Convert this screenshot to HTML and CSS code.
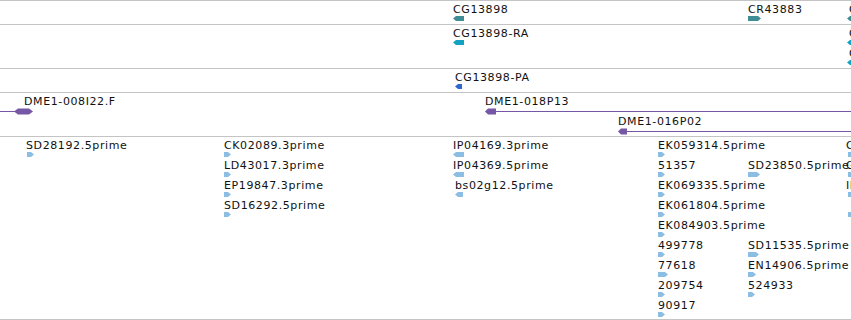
FILE: index.html
```html
<!DOCTYPE html>
<html lang="en">
<head>
    <meta charset="UTF-8">
    <meta name="viewport" content="width=device-width, initial-scale=1.0">
    <title>Track view</title>
    <link rel="stylesheet" href="styles.css">
</head>
<body>
    <div class="browser">
        <div class="track track-short" id="genes"></div>
        <div class="track track-tall" id="transcripts"></div>
        <div class="track track-short" id="proteins"></div>
        <div class="track track-tall" id="clones"></div>
        <div class="track track-est" id="ests"></div>
    </div>

    <script src="script.js"></script>
</body>
</html>
```

FILE: styles.css
```css
body {
    margin: 0;
    background-color: #fff;
    font-family: "DejaVu Sans", "Liberation Sans", sans-serif;
    font-size: 11px;
    color: #111;
}
.browser {
    width: 851px;
    height: 320px;
    overflow: hidden;
    border-top: 1px solid #c4c4c4;
    box-sizing: border-box;
}
.track {
    position: relative;
    overflow: hidden;
    border-bottom: 1px solid #c4c4c4;
}
.track-short {
    height: 23px;
}
.track-tall {
    height: 43px;
}
.track-est {
    height: 182px;
}
.track svg {
    position: absolute;
    top: 0;
    left: 0;
}
.label {
    position: absolute;
    line-height: 13px;
    white-space: nowrap;
    letter-spacing: 0.6px;
}
```

FILE: script.js
```js
const COLORS = {
    gene: '#3f8d95',
    rna: '#14a2c3',
    protein: '#2e68cf',
    clone: '#7557a6',
    est: '#8cbee3'
};
const ROW = 20;
const SVG_NS = 'http://www.w3.org/2000/svg';

// label, label x, row, glyph x, glyph width, strand
const tracks = {
    genes: { color: COLORS.gene, items: [
        ['CG13898', 453, 0, 453, 11, 'L'],
        ['CR43883', 748, 0, 748, 13, 'R'],
        ['CG13900', 849, 0, 847, 10, 'L']
    ]},
    transcripts: { color: COLORS.rna, items: [
        ['CG13898-RA', 453, 0, 453, 11, 'L'],
        ['CG13900-RA', 849, 0, 847, 10, 'L'],
        ['CG13900-RB', 849, 1, 847, 10, 'L']
    ]},
    proteins: { color: COLORS.protein, items: [
        ['CG13898-PA', 455, 0, 455, 7, 'L']
    ]},
    ests: { color: COLORS.est, items: [
        ['SD28192.5prime', 26, 0, 27, 7, 'R'],
        ['CK02089.3prime', 224, 0, 224, 7, 'R'],
        ['LD43017.3prime', 224, 1, 224, 7, 'R'],
        ['EP19847.3prime', 224, 2, 224, 7, 'R'],
        ['SD16292.5prime', 224, 3, 224, 7, 'R'],
        ['IP04169.3prime', 453, 0, 453, 11, 'L'],
        ['IP04369.5prime', 453, 1, 453, 11, 'L'],
        ['bs02g12.5prime', 455, 2, 455, 8, 'L'],
        ['EK059314.5prime', 658, 0, 658, 7, 'R'],
        ['51357', 658, 1, 658, 7, 'R'],
        ['EK069335.5prime', 658, 2, 658, 7, 'R'],
        ['EK061804.5prime', 658, 3, 658, 7, 'R'],
        ['EK084903.5prime', 658, 4, 658, 7, 'R'],
        ['499778', 658, 5, 658, 7, 'R'],
        ['77618', 658, 6, 658, 10, 'R'],
        ['209754', 658, 7, 658, 7, 'R'],
        ['90917', 658, 8, 658, 7, 'R'],
        ['SD23850.5prime', 748, 1, 748, 12, 'R'],
        ['SD11535.5prime', 748, 5, 748, 11, 'R'],
        ['EN14906.5prime', 748, 6, 748, 8, 'R'],
        ['524933', 748, 7, 748, 7, 'R'],
        ['CK01245.5prime', 846, 0, 848, 7, 'R'],
        ['GH03117.5prime', 846, 1, 848, 7, 'R'],
        ['IP06981.5prime', 846, 2, 848, 7, 'R'],
        ['', 0, 3, 848, 7, 'R']
    ]}
};

function arrowPoints(x, y, w, h, dir) {
    const head = Math.min(3, w / 2);
    if (dir === 'R') {
        return `${x},${y} ${x + w - head},${y} ${x + w},${y + h / 2} ${x + w - head},${y + h} ${x},${y + h}`;
    }
    return `${x + w},${y} ${x + head},${y} ${x},${y + h / 2} ${x + head},${y + h} ${x + w},${y + h}`;
}

function createSvg(track) {
    const svg = document.createElementNS(SVG_NS, 'svg');
    svg.setAttribute('width', 851);
    svg.setAttribute('height', track.clientHeight);
    track.appendChild(svg);
    return svg;
}

function addShape(svg, tag, attrs) {
    const el = document.createElementNS(SVG_NS, tag);
    for (const key in attrs) {
        el.setAttribute(key, attrs[key]);
    }
    svg.appendChild(el);
}

function addLabel(track, text, x, row) {
    if (!text) return;
    const label = document.createElement('span');
    label.className = 'label';
    label.textContent = text;
    label.style.left = x + 'px';
    label.style.top = (2 + row * ROW) + 'px';
    track.appendChild(label);
}

for (const id in tracks) {
    const track = document.getElementById(id);
    const svg = createSvg(track);
    tracks[id].items.forEach(([text, x, row, gx, w, dir]) => {
        addShape(svg, 'polygon', {
            points: arrowPoints(gx, 15 + row * ROW, w, 5, dir),
            fill: tracks[id].color
        });
        addLabel(track, text, x, row);
    });
}

// clone ends span past the view, so draw them as line + head
const clones = document.getElementById('clones');
const cloneSvg = createSvg(clones);

function cloneLine(x1, x2, row) {
    const cy = 18 + row * ROW + 0.5;
    addShape(cloneSvg, 'line', { x1, y1: cy, x2, y2: cy, stroke: COLORS.clone, 'stroke-width': 1 });
}

cloneLine(0, 15, 0);
addShape(cloneSvg, 'polygon', {
    points: '14,18.5 18,15.5 29,15.5 33,18.5 29,21.5 18,21.5',
    fill: COLORS.clone
});
addLabel(clones, 'DME1-008I22.F', 24, 0);

cloneLine(495, 851, 0);
addShape(cloneSvg, 'polygon', { points: arrowPoints(485, 15.5, 11, 6, 'L'), fill: COLORS.clone });
addLabel(clones, 'DME1-018P13', 485, 0);

cloneLine(625, 851, 1);
addShape(cloneSvg, 'polygon', { points: arrowPoints(618, 35.5, 9, 6, 'L'), fill: COLORS.clone });
addLabel(clones, 'DME1-016P02', 618, 1);
```
